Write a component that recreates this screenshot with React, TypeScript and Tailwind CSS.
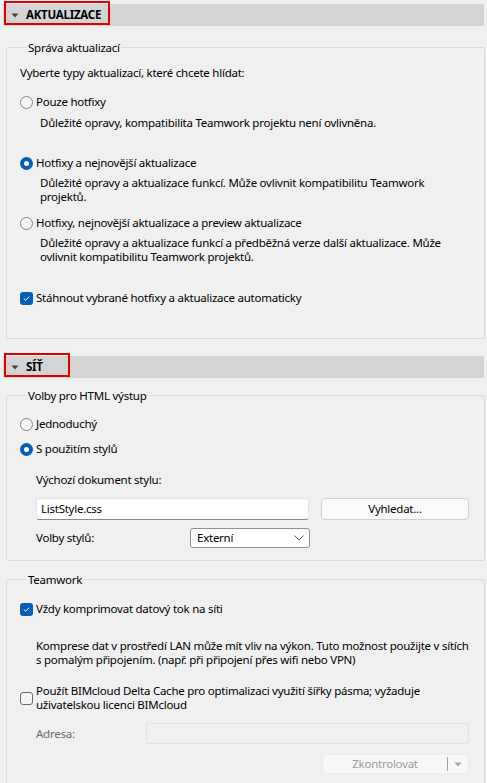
import React from "react";

const Radio = ({ checked }: { checked?: boolean }) =>
  checked ? (
    <span className="flex h-[13px] w-[13px] shrink-0 items-center justify-center rounded-full bg-[#005fb8]">
      <span className="h-[5px] w-[5px] rounded-full bg-white" />
    </span>
  ) : (
    <span className="h-[13px] w-[13px] shrink-0 rounded-full border border-[#858585] bg-[#f6f6f6]" />
  );

const Check = ({ checked }: { checked?: boolean }) =>
  checked ? (
    <span className="flex h-[13px] w-[13px] shrink-0 items-center justify-center rounded-[3px] bg-[#005fb8]">
      <svg width="9" height="9" viewBox="0 0 9 9">
        <path d="M1.8 4.6 L3.6 6.3 L7.2 2.6" fill="none" stroke="white" strokeWidth="1" />
      </svg>
    </span>
  ) : (
    <span className="h-[13px] w-[13px] shrink-0 rounded-[3px] border border-[#6a6a6a] bg-[#f6f6f6]" />
  );

const Header = ({ title, boxW }: { title: string; boxW: string }) => (
  <div className="relative ml-[3px] mr-[3px] flex h-[22px] items-center rounded-[2px] bg-[#d4d4d4]">
    <svg className="ml-[8px]" width="8" height="5" viewBox="0 0 8 5">
      <path d="M0.5 0.5 L7.5 0.5 L4 4.5 Z" fill="#444" />
    </svg>
    <span className="ml-[7px] font-bold leading-[14px] text-black">{title}</span>
    <div className={`absolute -top-[3px] left-[1px] h-[24px] border-2 border-[#e00000] ${boxW}`} />
  </div>
);

const Legend = ({ children }: { children: React.ReactNode }) => (
  <div className="-mt-[8px] ml-[7px] w-fit bg-[#f0f0f0] px-[1px] leading-[16px]">{children}</div>
);

export default function App() {
  return (
    <div
      className="h-[783px] w-[487px] overflow-hidden bg-[#f0f0f0] pt-[4px] text-[11.5px] leading-[14px] tracking-[-0.25px] text-black"
      style={{ fontFamily: '"Noto Sans", "Open Sans", sans-serif' }}
    >
      <Header title="AKTUALIZACE" boxW="w-[106px]" />

      <div className="ml-[6px] mr-[2px] mt-[21px] rounded-[2px] border border-[#dcdcdc] pb-[33px] pl-[13px]">
        <Legend>Správa aktualizací</Legend>
        <div className="mt-[10px]">Vyberte typy aktualizací, které chcete hlídat:</div>
        <div className="mt-[15px] flex items-center gap-[3px]">
          <Radio />
          <span>Pouze hotfixy</span>
        </div>
        <div className="mt-[7px] pl-[20px]">Důležité opravy, kompatibilita Teamwork projektu není ovlivněna.</div>
        <div className="mt-[26px] flex items-center gap-[3px]">
          <Radio checked />
          <span>Hotfixy a nejnovější aktualizace</span>
        </div>
        <div className="mt-[6px] pl-[20px] pr-[40px]">
          Důležité opravy a aktualizace funkcí. Může ovlivnit kompatibilitu Teamwork projektů.
        </div>
        <div className="mt-[12px] flex items-center gap-[3px]">
          <Radio />
          <span>Hotfixy, nejnovější aktualizace a preview aktualizace</span>
        </div>
        <div className="mt-[6px] pl-[20px] pr-[40px]">
          Důležité opravy a aktualizace funkcí a předběžná verze další aktualizace. Může ovlivnit kompatibilitu Teamwork projektů.
        </div>
        <div className="mt-[27px] flex items-center gap-[3px]">
          <Check checked />
          <span>Stáhnout vybrané hotfixy a aktualizace automaticky</span>
        </div>
      </div>

      <div className="mt-[17px]">
        <Header title="SÍŤ" boxW="w-[66px]" />
      </div>

      <div className="ml-[6px] mr-[2px] mt-[17px] rounded-[2px] border border-[#dcdcdc] pb-[12px] pl-[13px]">
        <Legend>Volby pro HTML výstup</Legend>
        <div className="mt-[13px] flex items-center gap-[3px]">
          <Radio />
          <span>Jednoduchý</span>
        </div>
        <div className="mt-[11px] flex items-center gap-[3px]">
          <Radio checked />
          <span>S použitím stylů</span>
        </div>
        <div className="mt-[17px] pl-[16px]">Výchozí dokument stylu:</div>
        <div className="mt-[11px] flex items-center pl-[16px]">
          <div className="flex h-[22px] w-[273px] items-center rounded-[3px] border border-[#e3e3e3] border-b-[#8a8a8a] bg-white pl-[4px]">
            ListStyle.css
          </div>
          <div className="ml-[12px] flex h-[22px] w-[148px] items-center justify-center rounded-[4px] border border-[#d0d0d0] bg-[#fbfbfb]">
            Vyhledat...
          </div>
        </div>
        <div className="mt-[8px] flex items-center pl-[16px]">
          <span className="w-[154px]">Volby stylů:</span>
          <div className="flex h-[20px] w-[120px] items-center justify-between rounded-[3px] border border-[#8f8f8f] bg-white pl-[6px] pr-[5px]">
            <span>Externí</span>
            <svg width="10" height="6" viewBox="0 0 10 6">
              <path d="M0.5 0.5 L5 5 L9.5 0.5" fill="none" stroke="#555" strokeWidth="1" />
            </svg>
          </div>
        </div>
      </div>

      <div className="ml-[6px] mr-[2px] mt-[18px] h-[300px] rounded-[2px] border border-[#dcdcdc] pl-[13px]">
        <Legend>Teamwork</Legend>
        <div className="mt-[14px] flex items-center gap-[3px]">
          <Check checked />
          <span>Vždy komprimovat datový tok na síti</span>
        </div>
        <div className="mt-[23px] pl-[16px] pr-[10px]">
          Komprese dat v prostředí LAN může mít vliv na výkon. Tuto možnost použijte v sítích s pomalým připojením. (např. při připojení přes wifi nebo VPN)
        </div>
        <div className="mt-[17px] flex items-center gap-[3px] pr-[40px]">
          <Check />
          <span>Použít BIMcloud Delta Cache pro optimalizaci využití šířky pásma; vyžaduje uživatelskou licenci BIMcloud</span>
        </div>
        <div className="mt-[11px] flex items-center pl-[16px]">
          <span className="w-[110px] text-[#6d6d6d]">Adresa:</span>
          <div className="h-[21px] w-[323px] rounded-[2px] border border-[#e3e3e3] bg-[#f0f0f0]" />
        </div>
        <div className="mt-[10px] flex justify-start pl-[302px]">
          <div className="flex h-[20px] w-[147px] items-center rounded-[4px] border border-[#ececec] bg-[#f8f8f8] text-[#9d9d9d]">
            <span className="flex-1 text-center">Zkontrolovat</span>
            <span className="h-[14px] w-[1px] bg-[#a0a0a0]" />
            <svg className="mx-[6px]" width="8" height="5" viewBox="0 0 8 5">
              <path d="M0.5 0.5 L7.5 0.5 L4 4.5 Z" fill="#a8a8a8" />
            </svg>
          </div>
        </div>
      </div>
    </div>
  );
}
